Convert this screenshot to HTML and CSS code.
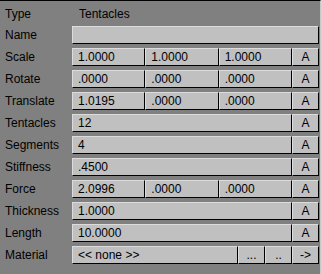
FILE: index.html
```html
<!DOCTYPE html>
<html lang="en">
<head>
  <meta charset="UTF-8">
  <meta name="viewport" content="width=device-width, initial-scale=1.0">
  <title>Tentacles</title>
  <link rel="stylesheet" href="styles.css">
</head>
<body>
  <div class="panel">
    <div class="row type-row">
      <span class="label">Type</span>
      <span class="value">Tentacles</span>
    </div>
    <div class="row">
      <span class="label">Name</span>
      <div class="fields"><span class="btn wide"></span></div>
    </div>
    <div class="row">
      <span class="label">Scale</span>
      <div class="fields">
        <span class="btn num">1.0000</span>
        <span class="btn num">1.0000</span>
        <span class="btn num">1.0000</span>
        <span class="btn small">A</span>
      </div>
    </div>
    <div class="row">
      <span class="label">Rotate</span>
      <div class="fields">
        <span class="btn num">.0000</span>
        <span class="btn num">.0000</span>
        <span class="btn num">.0000</span>
        <span class="btn small">A</span>
      </div>
    </div>
    <div class="row">
      <span class="label">Translate</span>
      <div class="fields">
        <span class="btn num">1.0195</span>
        <span class="btn num">.0000</span>
        <span class="btn num">.0000</span>
        <span class="btn small">A</span>
      </div>
    </div>
    <div class="row">
      <span class="label">Tentacles</span>
      <div class="fields">
        <span class="btn wide">12</span>
        <span class="btn small">A</span>
      </div>
    </div>
    <div class="row">
      <span class="label">Segments</span>
      <div class="fields">
        <span class="btn wide">4</span>
        <span class="btn small">A</span>
      </div>
    </div>
    <div class="row">
      <span class="label">Stiffness</span>
      <div class="fields">
        <span class="btn wide">.4500</span>
        <span class="btn small">A</span>
      </div>
    </div>
    <div class="row">
      <span class="label">Force</span>
      <div class="fields">
        <span class="btn num">2.0996</span>
        <span class="btn num">.0000</span>
        <span class="btn num">.0000</span>
        <span class="btn small">A</span>
      </div>
    </div>
    <div class="row">
      <span class="label">Thickness</span>
      <div class="fields">
        <span class="btn wide">1.0000</span>
        <span class="btn small">A</span>
      </div>
    </div>
    <div class="row">
      <span class="label">Length</span>
      <div class="fields">
        <span class="btn wide">10.0000</span>
        <span class="btn small">A</span>
      </div>
    </div>
    <div class="row">
      <span class="label">Material</span>
      <div class="fields">
        <span class="btn wide">&lt;&lt; none &gt;&gt;</span>
        <span class="btn small">...</span>
        <span class="btn small">..</span>
        <span class="btn small">-&gt;</span>
      </div>
    </div>
  </div>
</body>
</html>
```

FILE: styles.css
```css
body {
  margin: 0;
  background: #808080;
  font-family: "Liberation Sans", Arial, sans-serif;
  font-size: 12px;
  color: #000;
}
.panel {
  width: 321px;
  height: 274px;
  box-sizing: border-box;
  border-top: 1px solid #000;
  border-right: 1px solid #c8c8c8;
  padding-top: 4px;
  display: flex;
  flex-direction: column;
  gap: 4px;
}
.row {
  display: flex;
  height: 18px;
  line-height: 18px;
}
.type-row {
  margin-bottom: -1px;
}
.label {
  width: 67px;
  padding-left: 5px;
  flex-shrink: 0;
}
.value {
  padding-left: 7px;
}
.fields {
  display: flex;
  width: 247px;
}
.btn {
  box-sizing: border-box;
  height: 18px;
  line-height: 16px;
  background: #c0c0c0;
  border-top: 1px solid #dcdcdc;
  border-left: 1px solid #dcdcdc;
  border-bottom: 1px solid #000;
  border-right: 1px solid #000;
  padding-left: 5px;
  white-space: nowrap;
  overflow: hidden;
}
.wide {
  flex: 1;
}
.num {
  flex: 1;
}
.small {
  width: 27px;
  flex-shrink: 0;
  padding-left: 0;
  text-align: center;
}
```
